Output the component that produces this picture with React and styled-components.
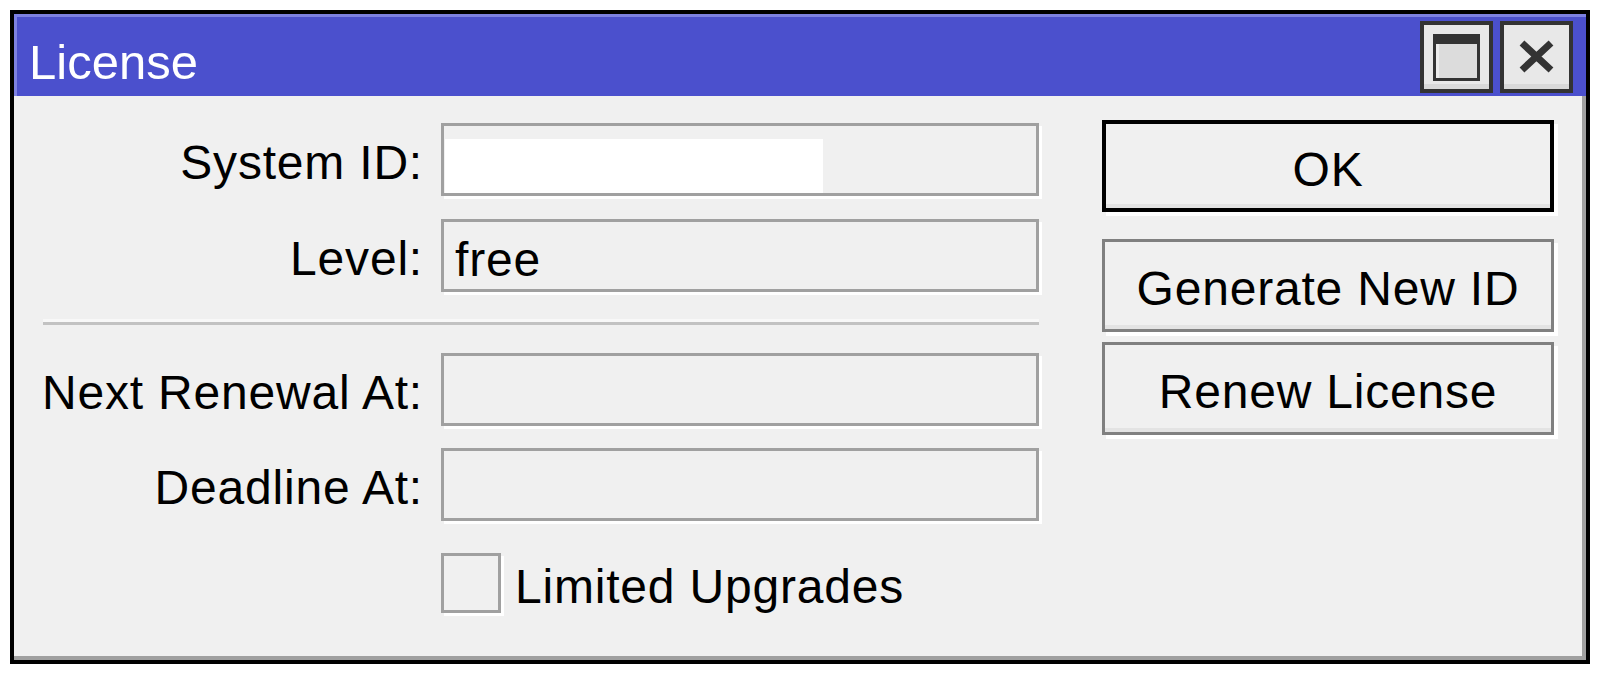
import React from 'react';
import styled, { createGlobalStyle } from 'styled-components';

const GlobalStyle = createGlobalStyle`
  html, body {
    margin: 0;
    padding: 0;
    background: #ffffff;
  }
  body {
    font-family: "Liberation Sans", Arial, sans-serif;
  }
`;

const Page = styled.div`
  padding: 10px;
`;

const Window = styled.div`
  display: flex;
  flex-direction: column;
  width: 1580px;
  height: 654px;
  box-sizing: border-box;
  border: 4px solid #000;
  background: #f0f0f0;
`;

const TitleBar = styled.div`
  display: flex;
  align-items: center;
  height: 82px;
  box-sizing: border-box;
  border-top: 3px solid #7d81e2;
  border-left: 3px solid #7d81e2;
  background: #4b50cd;
  padding: 0 13px 0 12px;
`;

const Title = styled.span`
  flex: 1;
  color: #fff;
  font-size: 49px;
  padding-top: 10px;
`;

const TitleButtons = styled.div`
  display: flex;
  gap: 7px;
`;

const TitleButton = styled.button`
  width: 73px;
  height: 72px;
  box-sizing: border-box;
  border: 4px solid #333;
  background: #e8e8e8;
  box-shadow: inset 0 -5px 0 #d9d9d9;
  padding: 0;
  display: flex;
  align-items: ${(p) => (p.$top ? 'flex-start' : 'center')};
  justify-content: center;
  padding-top: ${(p) => (p.$top ? '9px' : '0')};
`;

const Content = styled.div`
  flex: 1;
  display: flex;
  box-sizing: border-box;
  border-right: 4px solid #a0a0a0;
  border-bottom: 4px solid #a0a0a0;
  letter-spacing: 0.8px;
`;

const FormPane = styled.div`
  display: flex;
  flex-direction: column;
  padding-top: 27px;
  width: 1028px;
`;

const Row = styled.div`
  display: flex;
  align-items: center;
  height: 73px;
  margin-bottom: ${(p) => p.$gap || 0}px;
`;

const Label = styled.span`
  width: 409px;
  margin-right: 18px;
  text-align: right;
  font-size: 48px;
  color: #000;
  padding-top: 6px;
  white-space: nowrap;
`;

const Field = styled.div`
  display: flex;
  align-items: center;
  width: 598px;
  height: 73px;
  box-sizing: border-box;
  border: 3px solid #a0a0a0;
  box-shadow: 3px 3px 0 #fff;
  background: #f0f0f0;
`;

const FieldText = styled.span`
  font-size: 48px;
  color: #000;
  padding: 8px 0 0 11px;
`;

const Redacted = styled.span`
  align-self: flex-end;
  width: 378px;
  height: 54px;
  margin-left: 1px;
  background: #fff;
`;

const Separator = styled.div`
  margin: 30px 0 28px 29px;
  width: 996px;
  height: 3px;
  background: #c2c2c2;
  box-shadow: 0 -3px 0 #f8f8f8;
`;

const CheckRow = styled.label`
  display: flex;
  align-items: center;
  margin: 30px 0 0 427px;
`;

const CheckBox = styled.span`
  width: 60px;
  height: 60px;
  box-sizing: border-box;
  border: 3px solid #a0a0a0;
  box-shadow: 3px 3px 0 #fff;
  background: #f0f0f0;
`;

const CheckLabel = styled.span`
  margin-left: 14px;
  font-size: 48px;
  color: #000;
  padding-top: 8px;
`;

const ButtonPane = styled.div`
  display: flex;
  flex-direction: column;
  padding: 24px 0 0 60px;
`;

const Button = styled.button`
  width: 452px;
  height: ${(p) => (p.$main ? 92 : 93)}px;
  box-sizing: border-box;
  border: ${(p) => (p.$main ? '4px solid #000' : '3px solid #808080')};
  background: #f0f0f0;
  box-shadow: inset 0 -4px 0 #e3e3e3, 4px 4px 0 #fff;
  font-family: "Liberation Sans", Arial, sans-serif;
  font-size: 48px;
  letter-spacing: 0.8px;
  color: #000;
  padding: 6px 0 0;
  margin-bottom: ${(p) => p.$gap || 0}px;
`;

function MaximizeIcon() {
  return (
    <svg width="47" height="47" viewBox="0 0 47 47">
      <rect x="0" y="0" width="47" height="47" fill="#333" />
      <rect x="3" y="10" width="41" height="34" fill="#dcdcdc" />
      <rect x="3" y="10" width="3" height="34" fill="#ececec" />
    </svg>
  );
}

function CloseIcon() {
  return (
    <svg width="35" height="33" viewBox="0 0 35 33">
      <path d="M3 3 L32 30 M32 3 L3 30" stroke="#333" strokeWidth="7" />
    </svg>
  );
}

export default function App() {
  return (
    <Page>
      <GlobalStyle />
      <Window>
        <TitleBar>
          <Title>License</Title>
          <TitleButtons>
            <TitleButton $top>
              <MaximizeIcon />
            </TitleButton>
            <TitleButton>
              <CloseIcon />
            </TitleButton>
          </TitleButtons>
        </TitleBar>
        <Content>
          <FormPane>
            <Row $gap={23}>
              <Label>System ID:</Label>
              <Field>
                <Redacted />
              </Field>
            </Row>
            <Row>
              <Label>Level:</Label>
              <Field>
                <FieldText>free</FieldText>
              </Field>
            </Row>
            <Separator />
            <Row $gap={22}>
              <Label>Next Renewal At:</Label>
              <Field />
            </Row>
            <Row>
              <Label>Deadline At:</Label>
              <Field />
            </Row>
            <CheckRow>
              <CheckBox />
              <CheckLabel>Limited Upgrades</CheckLabel>
            </CheckRow>
          </FormPane>
          <ButtonPane>
            <Button $main $gap={27}>OK</Button>
            <Button $gap={10}>Generate New ID</Button>
            <Button>Renew License</Button>
          </ButtonPane>
        </Content>
      </Window>
    </Page>
  );
}
